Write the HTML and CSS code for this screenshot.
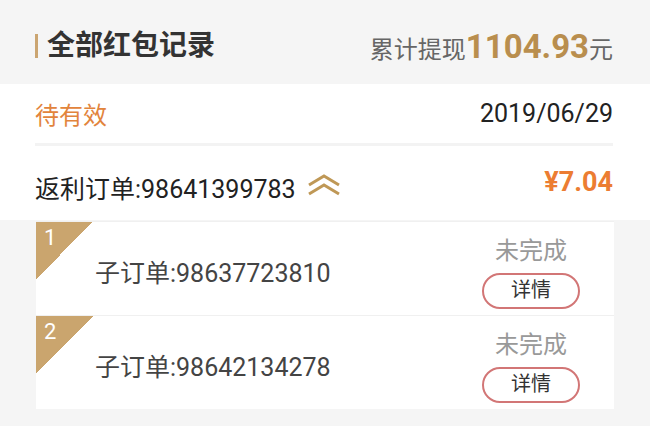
FILE: index.html
```html
<!DOCTYPE html>
<html lang="zh-CN">
<head>
    <meta charset="UTF-8">
    <meta name="viewport" content="width=device-width, initial-scale=1.0">
    <title>全部红包记录</title>
    <link rel="stylesheet" href="styles.css">
</head>
<body>
    <div class="header">
        <h1 class="title">全部红包记录</h1>
        <div class="total">累计提现<span class="total-num">1104.93</span>元</div>
    </div>

    <div class="order">
        <div class="order-top">
            <span class="state">待有效</span>
            <span class="date">2019/06/29</span>
        </div>
        <div class="order-main">
            <div class="order-no">
                返利订单:98641399783
                <svg class="fold" width="34" height="22" viewBox="0 0 34 22">
                    <polyline points="2,11 17,2 32,11" fill="none" stroke="#bf9856" stroke-width="3"/>
                    <polyline points="2,20 17,11 32,20" fill="none" stroke="#bf9856" stroke-width="3"/>
                </svg>
            </div>
            <span class="price">¥7.04</span>
        </div>
    </div>

    <div class="sub-list">
        <div class="sub-item">
            <span class="corner"><span class="corner-num">1</span></span>
            <span class="sub-no">子订单:98637723810</span>
            <div class="sub-side">
                <span class="sub-state">未完成</span>
                <a href="#" class="btn">详情</a>
            </div>
        </div>
        <div class="sub-item">
            <span class="corner"><span class="corner-num">2</span></span>
            <span class="sub-no">子订单:98642134278</span>
            <div class="sub-side">
                <span class="sub-state">未完成</span>
                <a href="#" class="btn">详情</a>
            </div>
        </div>
    </div>
</body>
</html>
```

FILE: styles.css
```css
body {
    margin: 0;
    background-color: #f5f5f5;
    font-family: Roboto, "Noto Sans CJK SC", sans-serif;
    color: #222;
}

.header {
    display: flex;
    align-items: center;
    justify-content: space-between;
    height: 84px;
    padding: 8px 37px 0 35px;
    box-sizing: border-box;
}

.title {
    margin: 0;
    padding-left: 9px;
    border-left: 3px solid #cba571;
    font-size: 28px;
    line-height: 24px;
    font-weight: bold;
    color: #333;
}

.total {
    font-size: 24px;
    color: #666;
    display: flex;
    align-items: baseline;
}

.total-num {
    font-size: 33px;
    font-weight: bold;
    color: #b98e4e;
}

.order {
    background-color: white;
    padding: 0 37px 0 35px;
}

.order-top {
    display: flex;
    align-items: center;
    justify-content: space-between;
    height: 59px;
    border-bottom: 3px solid #f3f3f3;
}

.state {
    font-size: 24px;
    color: #e2843c;
}

.date {
    font-size: 25px;
    color: #222;
}

.order-main {
    display: flex;
    align-items: center;
    justify-content: space-between;
    height: 74px;
}

.order-no {
    display: flex;
    align-items: center;
    font-size: 25px;
    color: #222;
    padding-top: 8px;
}

.fold {
    margin-left: 11px;
    margin-top: -4px;
}

.price {
    font-size: 27px;
    font-weight: bold;
    color: #ec7d32;
    padding-bottom: 2px;
}

.sub-list {
    margin: 1px 36px 0;
}

.sub-item {
    position: relative;
    display: flex;
    align-items: center;
    justify-content: space-between;
    height: 94px;
    padding: 0 34px 0 59px;
    background-color: white;
    border-top: 1px solid #f0f0f0;
    box-sizing: border-box;
}

.corner {
    position: absolute;
    top: 0;
    left: 0;
    width: 57px;
    height: 57px;
    background: linear-gradient(to bottom right, #caa56e 50%, transparent 50%);
}

.corner-num {
    position: absolute;
    top: 3px;
    left: 8px;
    font-size: 22px;
    color: white;
}

.sub-no {
    font-size: 25px;
    color: #444;
    padding-top: 4px;
}

.sub-side {
    display: flex;
    flex-direction: column;
    align-items: center;
    padding-top: 7px;
}

.sub-state {
    font-size: 24px;
    line-height: 30px;
    color: #999;
}

.btn {
    display: block;
    margin-top: 7px;
    width: 98px;
    height: 36px;
    box-sizing: border-box;
    border: 2px solid #d27676;
    border-radius: 18px;
    text-align: center;
    line-height: 31px;
    font-size: 20px;
    color: #333;
    text-decoration: none;
}
```
